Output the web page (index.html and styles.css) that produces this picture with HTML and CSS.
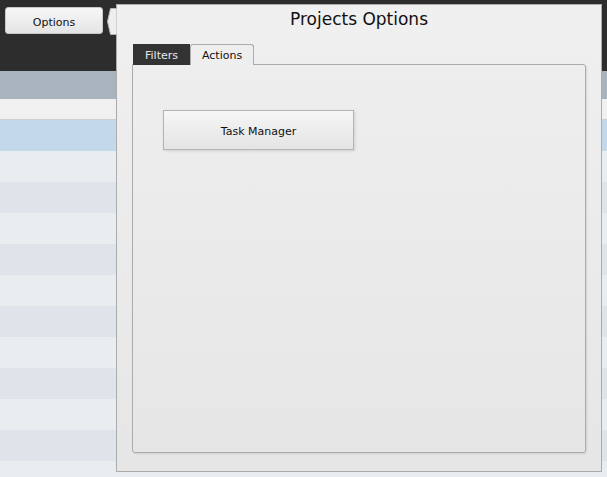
FILE: index.html
```html
<!DOCTYPE html>
<html>
<head>
  <link rel="stylesheet" href="styles.css">
</head>
<body>
    <div class="top-bar">
        <button class="options-btn">Options</button>
    </div>

    <div class="grid">
        <div class="grid-head"></div>
        <div class="filter-row"></div>
        <div class="grid-row selected"></div>
        <div class="grid-row"></div>
        <div class="grid-row alt"></div>
        <div class="grid-row"></div>
        <div class="grid-row alt"></div>
        <div class="grid-row"></div>
        <div class="grid-row alt"></div>
        <div class="grid-row"></div>
        <div class="grid-row alt"></div>
        <div class="grid-row"></div>
        <div class="grid-row alt"></div>
        <div class="grid-row"></div>
    </div>

    <div class="popup">
        <svg class="popup-arrow" width="10" height="28" viewBox="0 0 10 28">
            <polygon points="10,0.5 3.5,0.5 0.5,13.5 3.5,26.5 10,26.5" fill="#eeeeee" stroke="#b4b4b4" stroke-width="1"/>
        </svg>
        <div class="popup-title">Projects Options</div>
        <div class="tabs">
            <div class="tab">Filters</div>
            <div class="tab active">Actions</div>
        </div>
        <div class="tab-panel">
            <button class="action-btn">Task Manager</button>
        </div>
    </div>
</body>
</html>
```

FILE: styles.css
```css
body {
  margin: 0;
  font-family: "DejaVu Sans", Verdana, sans-serif;
  background: #e9edf0;
  overflow: hidden;
}

.top-bar {
  height: 71px;
  box-sizing: border-box;
  padding: 7px 5px;
  background: #2d2d2d;
}

.options-btn {
  width: 98px;
  height: 27px;
  padding-top: 5px;
  border: 1px solid #c8c8c8;
  border-radius: 3px;
  background: linear-gradient(#f7f7f7, #e4e4e4);
  font-family: inherit;
  font-size: 11px;
  color: #111;
}

.grid-head {
  height: 28px;
  background: #a9b3bd;
}

.filter-row {
  height: 20px;
  background: #f0f0f0;
  border-bottom: 1px solid #cfcfcf;
}

.grid-row {
  height: 31px;
  background: #e9edf0;
}

.grid-row.alt {
  background: #dfe3ea;
}

.grid-row.selected {
  background: #c3d8eb;
}

/* popup panel sits over the grid */
.popup {
  position: absolute;
  left: 116px;
  top: 4px;
  width: 486px;
  height: 468px;
  box-sizing: border-box;
  border: 1px solid #ababab;
  background: linear-gradient(#f0f0f0, #e6e6e6);
  padding: 0 15px 18px 15px;
  display: flex;
  flex-direction: column;
}

.popup-arrow {
  position: absolute;
  left: -10px;
  top: 3px;
}

.popup-title {
  height: 39px;
  padding-top: 4px;
  box-sizing: border-box;
  text-align: center;
  font-size: 17px;
  color: #111;
}

.tabs {
  display: flex;
  padding-left: 1px;
  position: relative;
  z-index: 1;
  margin-bottom: -1px;
}

.tab {
  height: 21px;
  box-sizing: border-box;
  padding: 5px 12px 0 12px;
  font-size: 11px;
  background: #333333;
  color: #e8e8e8;
}

.tab.active {
  background: #eeeeee;
  color: #111;
  border: 1px solid #ababab;
  border-bottom: none;
  border-radius: 3px 3px 0 0;
  padding: 4px 11px 0 11px;
}

.tab-panel {
  flex: 1;
  border: 1px solid #ababab;
  border-radius: 0 3px 3px 3px;
  background: linear-gradient(#eeeeee, #e6e6e6);
  box-shadow: 1px 1px 2px rgba(0, 0, 0, 0.1);
  padding: 45px 30px;
}

.action-btn {
  width: 191px;
  height: 40px;
  padding-top: 4px;
  border: 1px solid #b4b4b4;
  background: linear-gradient(#f6f6f6, #e4e4e4);
  box-shadow: 1px 1px 3px rgba(0, 0, 0, 0.12);
  font-family: inherit;
  font-size: 11px;
  color: #111;
}
```
